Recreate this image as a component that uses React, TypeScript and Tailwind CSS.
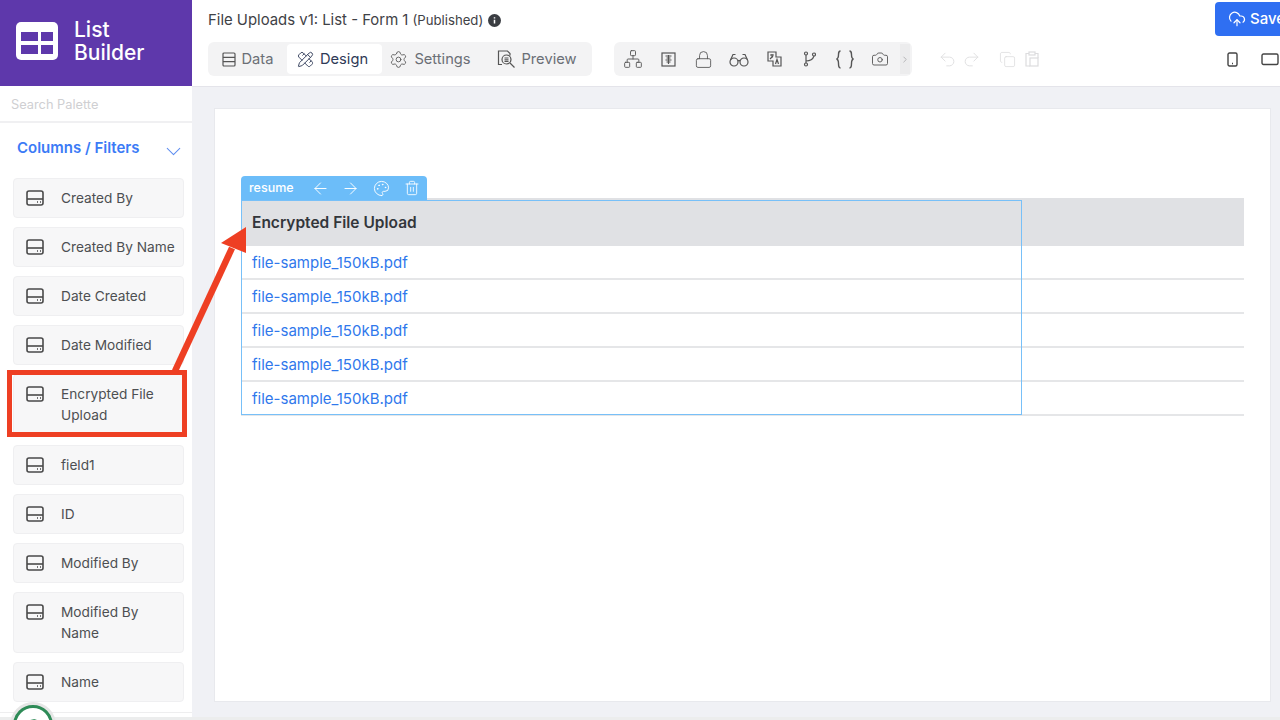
import { ArrowLeft, ArrowRight, Camera, ChevronDown, ChevronRight, CloudUpload, Copy, Lock, Network, Palette, PencilRuler, Redo2, Settings, Trash2, Undo2 } from "lucide-react";

function FieldIcon() {
  return (
    <svg width="18" height="16" viewBox="0 0 18 16" fill="none" stroke="#4a4a4a" strokeWidth="1.6" className="shrink-0">
      <rect x="1" y="1" width="16" height="14" rx="2" />
      <path d="M1 9h16" />
      <path d="M11 12h1M14 12h1" />
    </svg>
  );
}

function DataIcon() {
  return (
    <svg width="14" height="15" viewBox="0 0 14 15" fill="none" stroke="#555" strokeWidth="1.2">
      <rect x="1" y="1" width="12" height="13" rx="1" />
      <path d="M1 5.300h12M1 9.600h12" />
    </svg>
  );
}

function PreviewIcon() {
  return (
    <svg width="18" height="18" viewBox="0 0 18 18" fill="none" stroke="#555" strokeWidth="1.2" className="shrink-0">
      <path d="M5 14.500H1.500V1h9l2.500 2.500v2" />
      <circle cx="9.500" cy="9.500" r="4.500" />
      <path d="M7.500 8h4M7.500 9.800h4M7.500 11.500h4M13 13l4.500 4.500" />
    </svg>
  );
}

function Tab({ icon, label, active, w }: { icon: React.ReactNode; label: string; active?: boolean; w: string }) {
  return (
    <div className={`flex h-[30px] shrink-0 items-center justify-center gap-[6px] rounded text-[14.700px] ${w} ${active ? "bg-white text-[#2f3a57]" : "text-[#6b6f76]"}`}>
      {icon}
      <span>{label}</span>
    </div>
  );
}

function Item({ label, tall }: { label: string; tall?: string }) {
  return (
    <div className={`flex items-start gap-[17px] rounded border border-[#efeff1] bg-[#f7f7f8] pl-[12px] pr-[6px] pt-[9px] ${tall ?? "h-[40px]"}`}>
      <div className="pt-[2px]">
        <FieldIcon />
      </div>
      <span className="text-[13.700px] leading-[21px] text-[#4d4f52]">{label}</span>
    </div>
  );
}

function ToolBox() {
  return (
    <svg width="15" height="15" viewBox="0 0 15 15" fill="none" stroke="#555" strokeWidth="1.2">
      <rect x="1" y="1" width="13" height="13" />
      <path d="M4.500 4h6M5.500 6h4M4.500 8h6M5.500 10h4M7.500 3v9" />
    </svg>
  );
}

function Glasses() {
  return (
    <svg width="20" height="15" viewBox="0 0 20 15" fill="none" stroke="#555" strokeWidth="1.200">
      <circle cx="5" cy="10" r="4" />
      <circle cx="15" cy="10" r="4" />
      <path d="M9 9c.6-.6 1.400-.6 2 0M1.500 8L4 2.500h2.500M18.500 8L16 2.500h-2.500" />
    </svg>
  );
}

function Translate() {
  return (
    <svg width="15" height="16" viewBox="0 0 15 16" fill="none" stroke="#555" strokeWidth="1.200">
      <path d="M1 1h8v5h5v9H6V10H1z" />
      <path d="M3 4h4M5 3v4M3 8l3-3M8.500 13l1.500-4.500 1.500 4.500" />
    </svg>
  );
}

function Fork() {
  return (
    <svg width="13" height="16" viewBox="0 0 13 16" fill="none" stroke="#555" strokeWidth="1.200">
      <circle cx="3" cy="2.500" r="1.500" />
      <circle cx="3" cy="13.500" r="1.500" />
      <circle cx="11" cy="3.500" r="1.500" />
      <path d="M3 4v8M3 10c4 0 7-2 8-5" />
    </svg>
  );
}

function Curly() {
  return (
    <svg width="20" height="19" viewBox="0 0 20 19" fill="none" stroke="#555" strokeWidth="1.400">
      <path d="M5.500 1C3.500 1 3.500 2.500 3.500 4.500S3.500 8.500 1.500 9c2 .5 2 2.500 2 4.500s0 4.500 2 4.500" />
      <path d="M14.500 1c2 0 2 1.500 2 3.500s0 4 2 4.500c-2 .5-2 2.500-2 4.500s0 4.500-2 4.500" />
    </svg>
  );
}

function PasteIcon() {
  return (
    <svg width="14" height="16" viewBox="0 0 14 16" fill="none" stroke="#dcdcde" strokeWidth="1.200">
      <path d="M4 2.500H1v12.500h4M10 2.500h3V7" />
      <rect x="4" y="1" width="6" height="3" />
      <rect x="5" y="7" width="8" height="8" />
    </svg>
  );
}

function Slot({ children }: { children: React.ReactNode }) {
  return <div className="flex w-[35.400px] shrink-0 items-center justify-center">{children}</div>;
}

const rows = [0, 1, 2, 3, 4];

export default function App() {
  return (
    <div className="relative flex h-[720px] w-[1280px] overflow-hidden bg-white font-['Inter',sans-serif]">
      <aside className="flex w-[192px] shrink-0 flex-col">
        <div className="flex h-[86px] items-center gap-[16px] bg-[#5e38ab] pb-[4px] pl-[16px]">
          <svg width="42" height="38" viewBox="0 0 42 38">
            <rect width="42" height="38" rx="5" fill="#fff" />
            <path d="M5 10h17v9H5zM25 10h12v9H25zM5 23h17v9H5zM25 23h12v9H25z" fill="#5e38ab" />
          </svg>
          <div className="text-[21px] font-medium leading-[23px] text-white">
            List
            <br />
            Builder
          </div>
        </div>
        <div className="flex h-[37px] items-center border-b-2 border-[#f0f0f2] pl-[11px] pt-[3px] text-[12.800px] text-[#cfcfd2]">Search Palette</div>
        <div className="flex h-[55px] items-center justify-between pb-[5px] pl-[17px] pr-[6px]">
          <span className="text-[15px] font-semibold text-[#3b7bf6]">Columns / Filters</span>
          <ChevronDown size={25} color="#5f8ff0" strokeWidth={1} className="mt-[6px]" />
        </div>
        <div className="flex flex-col gap-[9px] pl-[13px] pr-[8px]">
          <Item label="Created By" />
          <Item label="Created By Name" />
          <Item label="Date Created" />
          <Item label="Date Modified" />
          <Item label="Encrypted File Upload" tall="h-[62px]" />
          <Item label="field1" />
          <Item label="ID" />
          <Item label="Modified By" />
          <Item label="Modified By Name" tall="h-[61px]" />
          <Item label="Name" />
        </div>
      </aside>

      <main className="flex min-w-0 flex-1 flex-col">
        <header className="h-[87px] shrink-0 border-b border-[#e4e4ea] pl-[16px]">
          <div className="flex h-[42px] items-start justify-between">
            <div className="flex items-center gap-[4px] pt-[11px] text-[14.900px] leading-[18px] text-[#3f4246]">
              <span>File Uploads v1: List - Form 1</span>
              <span className="text-[13.200px]">(Published)</span>
              <svg width="13" height="13" viewBox="0 0 13 13" className="ml-[1px]">
                <circle cx="6.500" cy="6.500" r="6.500" fill="#3a3d42" />
                <path d="M6.500 5.800v3.600M6.500 3.200v1.200" stroke="#fff" strokeWidth="1.500" />
              </svg>
            </div>
            <div className="mt-[2px] flex h-[34px] w-[65px] items-center gap-[4px] rounded-l bg-[#2f6ff2] pl-[13px] text-[15px] font-medium text-white">
              <CloudUpload size={18} strokeWidth={1.6} className="shrink-0" />
              <span>Save</span>
            </div>
          </div>
          <div className="flex items-start">
            <div className="flex h-[34px] w-[384px] shrink-0 items-center rounded-md bg-[#f3f3f4] pl-[2px]">
              <Tab w="w-[77px] pr-[2px]" icon={<DataIcon />} label="Data" />
              <Tab w="w-[95px] pr-[4px]" active icon={<PencilRuler size={17} strokeWidth={1.3} color="#2f3a57" />} label="Design" />
              <Tab w="w-[98px] pr-[2px]" icon={<Settings size={19} strokeWidth={1.1} color="#555" />} label="Settings" />
              <Tab w="w-[114px]" icon={<PreviewIcon />} label="Preview" />
            </div>
            <div className="ml-[22px] flex h-[34px] w-[298px] shrink-0 items-center rounded-md bg-[#f3f3f4] pl-[1px]">
              <div className="flex w-[285px] items-center">
                <Slot><Network size={20} strokeWidth={1.1} color="#555" /></Slot>
                <Slot><ToolBox /></Slot>
                <Slot><Lock size={19} strokeWidth={1.1} color="#555" /></Slot>
                <Slot><Glasses /></Slot>
                <Slot><Translate /></Slot>
                <Slot><Fork /></Slot>
                <Slot><Curly /></Slot>
                <Slot><Camera size={18} strokeWidth={1.2} color="#555" /></Slot>
              </div>
              <div className="flex h-[30px] w-[10px] shrink-0 items-center justify-center bg-[#ececed]">
                <ChevronRight size={13} color="#a9a9ac" />
              </div>
            </div>
            <div className="ml-[26px] flex h-[34px] items-center text-[#dcdcde]">
              <Undo2 size={19} strokeWidth={1.1} />
              <Redo2 size={19} strokeWidth={1.1} className="ml-[5px]" />
              <Copy size={17} strokeWidth={1.1} className="ml-[18px]" />
              <div className="ml-[9px]"><PasteIcon /></div>
            </div>
            <div className="ml-auto flex h-[34px] items-center">
              <svg width="11" height="15" viewBox="0 0 11 15" fill="none" stroke="#444" strokeWidth="1.400">
                <rect x="1" y="1" width="9" height="13" rx="1.500" />
                <path d="M5 11.500h1" />
              </svg>
              <svg width="18" height="13" viewBox="0 0 18 13" fill="none" stroke="#444" strokeWidth="1.400" className="ml-[23px] mr-[1px]">
                <rect x="1" y="1" width="16" height="10.500" rx="1.500" />
              </svg>
            </div>
          </div>
        </header>

        <div className="flex-1 border-b-[3px] border-[#eceded] bg-[#f0f1f5] pb-[15px] pl-[22px] pr-[9px] pt-[21px]">
          <div className="relative h-[594px] border border-[#e8e9ed] bg-white pl-[26px] pr-[26px] pt-[89px]">
            <div className="flex h-[48px] items-center bg-[#e0e1e4] pl-[11px] pt-[2px] text-[15.500px] font-semibold text-[#33363b]">Encrypted File Upload</div>
            {rows.map((r) => (
              <div key={r} className="flex h-[34px] items-center border-b-2 border-[#e5e6e8] pl-[11px] pt-[3px] text-[15px] text-[#2f78ec] last:border-[#dedfe2]">
                file-sample_150kB.pdf
              </div>
            ))}
            <div className="absolute left-[26px] top-[91px] h-[215px] w-[781px] border border-[#78c0f8]" />
            <div className="absolute left-[26px] top-[67px] flex h-[24px] w-[186px] items-center rounded-t bg-[#6cbdf9] pl-[8px] text-white">
              <span className="text-[12.500px] font-medium">resume</span>
              <ArrowLeft size={19} strokeWidth={1.2} className="ml-[17px]" />
              <ArrowRight size={19} strokeWidth={1.2} className="ml-[11px]" />
              <Palette size={17} strokeWidth={1.300} className="ml-[13px]" />
              <Trash2 size={16} strokeWidth={1.300} className="ml-[14px]" />
            </div>
          </div>
        </div>
      </main>

      <div className="absolute bottom-0 left-0 right-0 h-[3px] bg-[#eceded]" />
      <div className="absolute left-0 top-[712px] h-[1px] w-[192px] bg-[#eeeeef]" />
      <div className="absolute left-[13px] top-[705px] h-[40px] w-[40px] rounded-full border-[3px] border-[#2e8b57] bg-white shadow-[0_0_0_3px_#e6e6e6]">
        <svg width="34" height="34" viewBox="0 0 34 34" className="absolute left-0 top-0">
          <path d="M10 14c3-2 7-3 11-3-3 1-6 3-8 6z" fill="#2e8b57" />
        </svg>
      </div>

      <div className="pointer-events-none absolute left-[7px] top-[370px] h-[67px] w-[180px] border-[5px] border-[#ee3f23]" />
      <svg className="pointer-events-none absolute left-[160px] top-[220px]" width="100" height="155" viewBox="0 0 100 155">
        <path d="M15 151L72 28" stroke="#ee3f23" strokeWidth="6.500" fill="none" />
        <path d="M86 7L61 23L86 33z" fill="#ee3f23" />
      </svg>
    </div>
  );
}
